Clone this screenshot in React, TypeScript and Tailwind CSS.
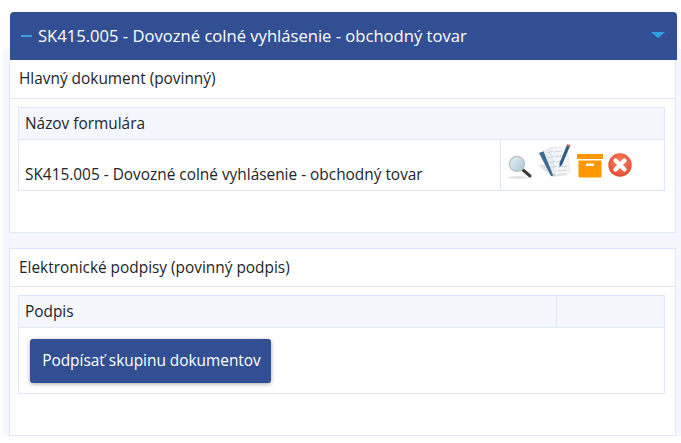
const font = { fontFamily: '"Open Sans", sans-serif' };

function Magnifier() {
  return (
    <svg width="26" height="26" viewBox="0 0 26 26" className="shrink-0">
      <defs>
        <linearGradient id="lens" x1="0" y1="0" x2="1" y2="1">
          <stop offset="0" stopColor="#eaf3f6" />
          <stop offset="1" stopColor="#a5c4d2" />
        </linearGradient>
      </defs>
      <ellipse cx="11" cy="23.5" rx="10" ry="1.5" fill="#e4e4e4" />
      <path d="M15.500 15.500 L23 22" stroke="#3a3a3a" strokeWidth="3" strokeLinecap="round" />
      <circle cx="10" cy="10" r="7.500" fill="url(#lens)" stroke="#bcc8cc" strokeWidth="1.600" />
    </svg>
  );
}

function Forms() {
  return (
    <svg width="34" height="36" viewBox="0 0 34 36" className="shrink-0">
      <path d="M0 21 L14 33 L30 31 L14 20 Z" fill="#e2e2e2" />
      <path d="M1 9 L6 7 L17 31 L13 32 Z" fill="#3c6a94" />
      <path d="M5 6 L18 2 L24 29 L15 31 Z" fill="#e9ecf0" />
      <path d="M12 4 L29 3 L32 28 L18 31 Z" fill="#f4f5f7" stroke="#dde1e5" strokeWidth="0.6" />
      <path d="M9 9 L15 7 M10 14 L16 12 M11 19 L17 17 M13 24 L19 22" stroke="#ccd4db" strokeWidth="1" />
      <path d="M16 8 L24 7 M17 13 L23 12 M18 18 L22 17 M20 23 L29 22 M20 27 L29 26" stroke="#ccd4db" strokeWidth="1" />
      <path d="M29 1 L32 2 L24 21 L21.500 23 L21.500 19 Z" fill="#2c5a88" />
      <path d="M29 0 L32.500 1 L32 3 L28.500 2 Z" fill="#c96a5a" />
    </svg>
  );
}

function ArchiveBox() {
  return (
    <svg width="26" height="24" viewBox="0 0 26 24" className="shrink-0">
      <rect x="0" y="0" width="26" height="5" rx="0.6" fill="#ff9800" />
      <path d="M1.500 6.500 H24.500 V22 A1.500 1.500 0 0 1 23 23.500 H3 A1.500 1.500 0 0 1 1.500 22 Z" fill="#ff9800" />
      <rect x="9" y="9.500" width="8" height="2.500" rx="0.5" fill="#fff" />
    </svg>
  );
}

function CloseCircle() {
  return (
    <svg width="24" height="24" viewBox="0 0 24 24" className="shrink-0">
      <defs>
        <radialGradient id="red" cx="0.5" cy="0.4" r="0.65">
          <stop offset="0" stopColor="#f98a68" />
          <stop offset="1" stopColor="#e2452a" />
        </radialGradient>
      </defs>
      <circle cx="12" cy="12" r="11.700" fill="url(#red)" />
      <path d="M7.500 7.500 L16.500 16.500 M16.500 7.500 L7.500 16.500" stroke="#fff" strokeWidth="4.200" strokeLinecap="round" />
    </svg>
  );
}

export default function App() {
  return (
    <div style={font} className="w-[681px] h-[443px] overflow-hidden bg-white pt-[49px] pl-[3px] text-[15.4px] leading-[22px] text-[#212529]">
      <div className="flow-root h-[387px] rounded-bl-[4px] bg-[#f4f7fe] pl-[6px]">
        <div className="-mt-[37px] ml-px flex h-[48px] w-[667px] items-center justify-between rounded-t-[4px] bg-[#324f94] pl-[11px] pr-[12px] text-[16.6px] text-white">
          <div className="flex items-center gap-[6px]">
            <span className="h-[2px] w-[11px] bg-[#3aa0dc]" />
            <span>SK415.005 - Dovozné colné vyhlásenie - obchodný tovar</span>
          </div>
          <span className="mb-[2px] h-0 w-0 border-x-[7px] border-t-[6px] border-x-transparent border-t-[#2ea3e3]" />
        </div>
        <div className="w-[667px]">
          <section className="h-[173px] border border-t-0 border-[#dfe8fb] bg-white">
            <div className="flex h-[39px] items-center border-b border-[#dfe8fb] pl-[9px]">Hlavný dokument (povinný)</div>
            <div className="ml-[8px] mt-[8px] h-[84px] w-[647px] border border-[#dfe8fb]">
              <div className="flex h-[32px] items-center border-b border-[#dfe8fb] bg-[#f4f7fe] pl-[6px]">Názov formulára</div>
              <div className="flex h-[50px]">
                <div className="flex w-[482px] items-center border-r border-[#dfe8fb] pl-[6px] pt-[19px]">SK415.005 - Dovozné colné vyhlásenie - obchodný tovar</div>
                <div className="flex items-center pl-[6px] pb-[1px]">
                  <span className="mt-[4px]"><Magnifier /></span>
                  <span className="ml-[5px] mb-[6px]"><Forms /></span>
                  <span className="ml-[5px] mt-[3px]"><ArchiveBox /></span>
                  <span className="ml-[5px]"><CloseCircle /></span>
                </div>
              </div>
            </div>
          </section>
          <section className="mt-[15px] h-[188px] border border-[#dfe8fb] bg-white">
            <div className="flex h-[38px] items-center border-b border-[#dfe8fb] pl-[9px]">Elektronické podpisy (povinný podpis)</div>
            <div className="ml-[8px] mt-[8px] h-[99px] w-[647px] border border-[#dfe8fb]">
              <div className="flex h-[32px] border-b border-[#dfe8fb] bg-[#f4f7fe]">
                <div className="flex w-[538px] items-center border-r border-[#dfe8fb] pl-[6px]">Podpis</div>
              </div>
              <button className="ml-[11px] mt-[11px] h-[44px] w-[241px] rounded-[3px] bg-[#324f94] pl-[2px] text-center text-white shadow-[0_1px_4px_rgba(0,0,0,0.35)]">Podpísať skupinu dokumentov</button>
            </div>
          </section>
        </div>
      </div>
    </div>
  );
}
